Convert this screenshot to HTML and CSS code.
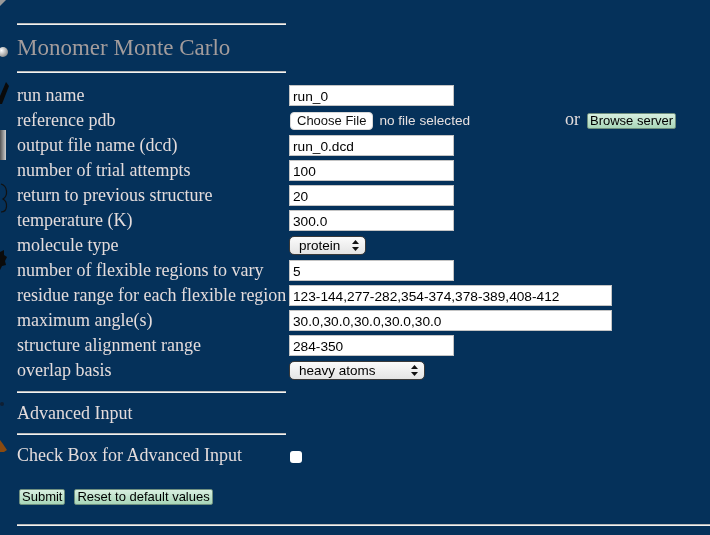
FILE: index.html
```html
<!DOCTYPE html>
<html>
<head>
<meta charset="utf-8">
<link rel="stylesheet" href="styles.css">
</head>
<body>
<svg class="deco" width="22" height="535" viewBox="0 0 22 535">
  <defs>
    <radialGradient id="ball" cx="0.35" cy="0.35" r="0.7">
      <stop offset="0" stop-color="#ffffff"/>
      <stop offset="1" stop-color="#8a8a8a"/>
    </radialGradient>
    <linearGradient id="bar" x1="0" x2="1">
      <stop offset="0" stop-color="#555"/>
      <stop offset="1" stop-color="#d0d0d0"/>
    </linearGradient>
  </defs>
  <path d="M0 0 L6 0 L0 6 Z" fill="#9a9a9a"/>
  <circle cx="3" cy="52" r="5" fill="url(#ball)"/>
  <path d="M6 82 L9 86 L2 104 L0 104 L0 96 Z" fill="#0a0a0a"/>
  <rect x="0" y="130" width="6" height="30" fill="url(#bar)"/>
  <path d="M1 184 C8 186 8 196 3 199 C8 202 8 212 1 212" fill="none" stroke="#111" stroke-width="1.2"/>
  <path d="M0 252 L4 250 L4 255 L7 257 L5 261 L6 265 L2 266 L0 270 Z" fill="#0b0b0b"/>
  <circle cx="2" cy="404" r="2" fill="#0f1f33"/>
  <path d="M0 440 L3 444 L7 450 L4 452 L0 452 Z" fill="#8a4a10"/>
</svg>
<div class="page">
  <div class="rule short"></div>
  <h2 class="title">Monomer Monte Carlo</h2>
  <div class="rule short"></div>

  <form class="form">
    <label class="lbl">run name</label>
    <div class="field"><input class="txt" type="text" value="run_0"></div>

    <label class="lbl">reference pdb</label>
    <div class="field filefield">
      <div class="filepart">
        <button type="button" class="choose">Choose File</button>
        <span class="nofile">no file selected</span>
      </div>
      <span class="or">or</span>
      <button type="button" class="gbtn">Browse server</button>
    </div>

    <label class="lbl">output file name (dcd)</label>
    <div class="field"><input class="txt" type="text" value="run_0.dcd"></div>

    <label class="lbl">number of trial attempts</label>
    <div class="field"><input class="txt" type="text" value="100"></div>

    <label class="lbl">return to previous structure</label>
    <div class="field"><input class="txt" type="text" value="20"></div>

    <label class="lbl">temperature (K)</label>
    <div class="field"><input class="txt" type="text" value="300.0"></div>

    <label class="lbl">molecule type</label>
    <div class="field">
      <span class="sel sel-protein">
        <select><option>protein</option><option>rna</option></select>
        <svg class="arrows" width="7" height="11" viewBox="0 0 7 11"><path d="M3.5 0 L7 4 L0 4 Z M0 7 L7 7 L3.5 11 Z" fill="#111"/></svg>
      </span>
    </div>

    <label class="lbl">number of flexible regions to vary</label>
    <div class="field"><input class="txt" type="text" value="5"></div>

    <label class="lbl">residue range for each flexible region</label>
    <div class="field"><input class="txt wide" type="text" value="123-144,277-282,354-374,378-389,408-412"></div>

    <label class="lbl">maximum angle(s)</label>
    <div class="field"><input class="txt wide" type="text" value="30.0,30.0,30.0,30.0,30.0"></div>

    <label class="lbl">structure alignment range</label>
    <div class="field"><input class="txt" type="text" value="284-350"></div>

    <label class="lbl">overlap basis</label>
    <div class="field">
      <span class="sel sel-basis">
        <select><option>heavy atoms</option><option>all</option><option>backbone</option></select>
        <svg class="arrows" width="7" height="11" viewBox="0 0 7 11"><path d="M3.5 0 L7 4 L0 4 Z M0 7 L7 7 L3.5 11 Z" fill="#111"/></svg>
      </span>
    </div>
  </form>

  <div class="rule short r3"></div>
  <div class="section">Advanced Input</div>
  <div class="rule short"></div>

  <div class="adv">
    <span class="lbl advlbl">Check Box for Advanced Input</span>
    <input class="chk" type="checkbox">
  </div>

  <div class="actions">
    <button type="button" class="gbtn">Submit</button>
    <button type="button" class="gbtn">Reset to default values</button>
  </div>

  <div class="rule full"></div>
</div>
</body>
</html>
```

FILE: styles.css
```css
html, body {
  margin: 0;
  padding: 0;
  background: #05315a;
  height: 100%;
  overflow: hidden;
}

.deco {
  position: fixed;
  left: 0;
  top: 0;
  z-index: 0;
}

.page {
  position: relative;
  z-index: 1;
  padding: 23px 0 0 17px;
  font-family: "Liberation Serif", "Times New Roman", serif;
  color: #e4dcdc;
}

.rule {
  height: 0;
  border-top: 1px solid #b8b8b8;
  border-bottom: 1px solid #f2f2f2;
}

.rule.short { width: 269px; }
.rule.full { margin-top: 19px; }

.title {
  margin: 0;
  height: 46px;
  line-height: 46px;
  font-size: 23px;
  font-weight: normal;
  color: #a39c9c;
}

.form {
  display: grid;
  grid-template-columns: 272px auto;
  grid-auto-rows: 25px;
  align-items: center;
  margin-top: 10px;
}

.lbl {
  font-size: 18px;
  line-height: 25px;
  white-space: nowrap;
}

.field {
  display: flex;
  align-items: center;
  height: 25px;
}

.txt {
  box-sizing: border-box;
  width: 165px;
  height: 21px;
  margin: 0;
  padding: 1px 3px 0;
  border: 1px solid #c4c4c4;
  background: #fff;
  font-family: "Liberation Sans", Arial, sans-serif;
  font-size: 13.7px;
  color: #000;
  outline: none;
}

.txt.wide { width: 323px; }

.filepart {
  display: flex;
  align-items: center;
  width: 276px;
}

.choose {
  box-sizing: border-box;
  height: 18px;
  margin: 0 0 0 1px;
  padding: 0 6px;
  border: 1px solid #d8d8d8;
  border-radius: 4px;
  background: #fff;
  font-family: "Liberation Sans", Arial, sans-serif;
  font-size: 13px;
  line-height: 16px;
  color: #111;
}

.nofile {
  margin-left: 6px;
  font-family: "Liberation Sans", Arial, sans-serif;
  font-size: 13.6px;
  color: #e6e0e0;
}

.or {
  font-size: 18px;
  color: #e4dcdc;
  margin-right: 7px;
  margin-top: -2px;
}

.gbtn {
  box-sizing: border-box;
  height: 16px;
  margin: 0;
  padding: 0 2px;
  border: 1px solid #6f8f7f;
  border-radius: 2px;
  background: linear-gradient(#d8efe0, #a8d6b8);
  font-family: "Liberation Sans", Arial, sans-serif;
  font-size: 13px;
  line-height: 14px;
  color: #000;
}

.sel {
  position: relative;
  display: inline-block;
}

.sel select {
  appearance: none;
  -webkit-appearance: none;
  box-sizing: border-box;
  height: 19px;
  margin: 0;
  padding: 0 0 0 9px;
  border: 1px solid #3a3a3a;
  border-radius: 5px;
  background: linear-gradient(#fbfbfb, #e4e4e4);
  font-family: "Liberation Sans", Arial, sans-serif;
  font-size: 13.5px;
  line-height: 17px;
  color: #000;
  outline: none;
}

.sel-protein select { width: 77px; }
.sel-basis select { width: 136px; }

.arrows {
  position: absolute;
  right: 7px;
  top: 4px;
  pointer-events: none;
}

.r3 { margin-top: 8px; }

.section {
  height: 40px;
  line-height: 40px;
  font-size: 18px;
}

.adv {
  display: flex;
  align-items: center;
  height: 40px;
}

.advlbl {
  width: 273px;
}

.chk {
  appearance: none;
  -webkit-appearance: none;
  box-sizing: border-box;
  width: 12px;
  height: 12px;
  margin: 4px 0 0 0;
  border: none;
  border-radius: 3px;
  background: #fff;
}

.actions {
  display: flex;
  gap: 9px;
  margin-top: 14px;
  padding-left: 2px;
}
```
